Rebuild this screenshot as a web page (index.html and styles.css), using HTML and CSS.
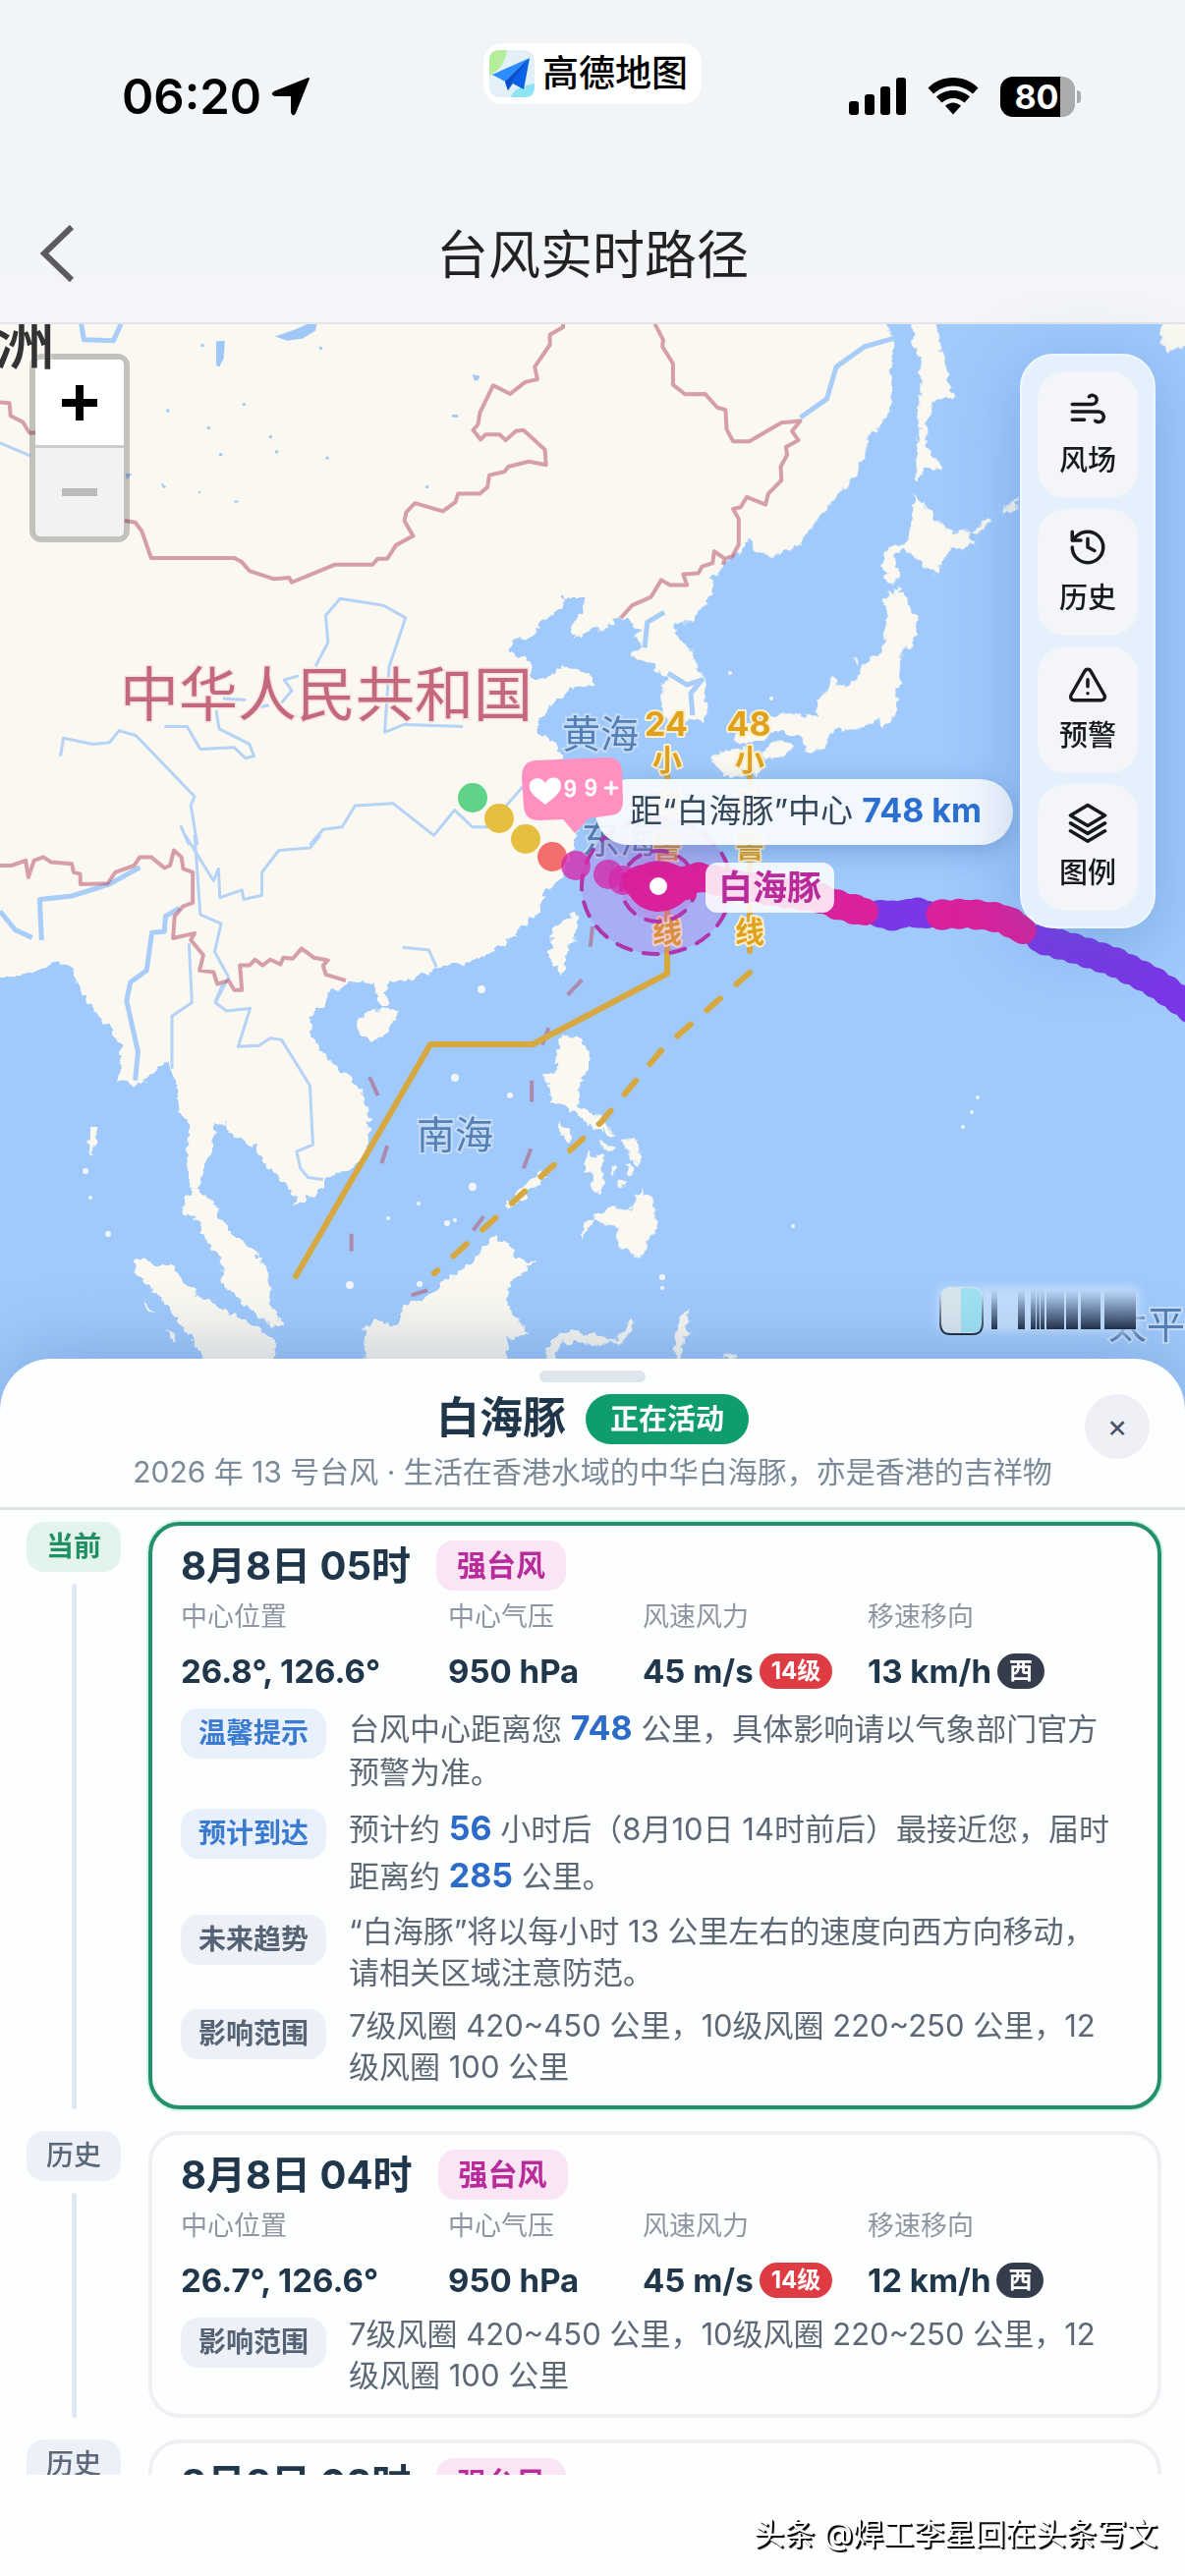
FILE: index.html
```html
<!DOCTYPE html>
<html lang="zh-CN">
<head>
    <meta charset="UTF-8">
    <meta name="viewport" content="width=device-width, initial-scale=1.0">
    <title>台风实时路径</title>
    <link rel="stylesheet" href="styles.css">
</head>
<body>
    <div class="status-bar">
        <div class="status-left">
            <span>06:20</span>
            <svg width="40" height="40" viewBox="0 0 40 40" stroke="#000" stroke-width="2" stroke-linejoin="round"><path d="M38 2L24 37Q22 40 21 36V20.500Q21 19 19.500 19H4Q0 18 3 16Z"/></svg>
        </div>
        <div class="app-pill">
            <svg width="46" height="48" viewBox="0 0 46 48">
                <rect width="46" height="48" rx="10" fill="#e4f0f7"/>
                <path d="M10 0H18Q16 18 0 26V10Q0 0 10 0Z" fill="#b5ee9b"/>
                <path d="M22 48Q24 38 46 34V38Q46 48 36 48Z" fill="#8fe3f2"/>
                <path d="M41 8L3 25L16 32Z" fill="#2a8cff"/>
                <path d="M41 8L16 32L19 41L24 34L35 40Z" fill="#0b62e6"/>
                <path d="M41 8L16 32L19 41L22 33Z" fill="#0a4fc4"/>
            </svg>
            <span>高德地图</span>
        </div>
        <div class="status-right">
            <svg width="58" height="38" viewBox="0 0 58 38"><rect y="24" width="10" height="14" rx="3"/><rect x="16" y="17" width="10" height="21" rx="3"/><rect x="32" y="9" width="10" height="29" rx="3"/><rect x="48" width="10" height="38" rx="3"/></svg>
            <svg width="52" height="38" viewBox="0 0 52 38"><path d="M26 0C36 0 45 4 51.500 10.500L46 16.500C40.500 11.500 33.500 8.500 26 8.500S11.500 11.500 6 16.500L.5 10.500C7 4 16 0 26 0ZM26 13C32.500 13 38.500 15.500 43 19.500L37.500 25.500C34.500 22.800 30.500 21 26 21S17.500 22.800 14.500 25.500L9 19.500C13.500 15.500 19.500 13 26 13ZM26 25.500C29 25.500 32 26.800 34 28.800L26 37.500L18 28.800C20 26.800 23 25.500 26 25.500Z"/></svg>
            <div class="battery"><span>80</span></div>
        </div>
    </div>

    <header class="header">
        <button class="back" aria-label="返回">
            <svg width="36" height="58" viewBox="0 0 36 58" fill="none" stroke="#5c5c60" stroke-width="6"><path d="M33 2L5 29L33 56"/></svg>
        </button>
        <h1>台风实时路径</h1>
    </header>

    <main class="map">
        <svg class="map-canvas" viewBox="0 330 1206 1110" font-family="Noto Sans CJK SC, sans-serif">
            <defs>
                <filter id="coast" x="0" y="0" width="100%" height="100%">
                    <feTurbulence type="fractalNoise" baseFrequency="0.12" numOctaves="2" seed="4"/>
                    <feDisplacementMap in="SourceGraphic" scale="11" xChannelSelector="R" yChannelSelector="G"/>
                </filter>
            </defs>
            <rect y="330" width="1206" height="1110" fill="#a0cafc"/>

            <!-- land -->
            <g fill="#faf8f0" filter="url(#coast)">
                <g transform="translate(0 320) scale(.3846 .3444)">
                    <path d="M-40-40H1610V930L1568 930L1510 970L1525 955L1510 940L1520 910L1548 870L1545 836H1490L1485 870L1430 905L1425 930L1385 965L1350 955L1345 995L1400 1030L1410 1075H1445L1490 1035L1530 1055L1568 1065V1095L1520 1100L1490 1130L1455 1150L1440 1180L1420 1205L1425 1240L1470 1260L1485 1310L1534 1400V1496L1510 1600H-40Z"/>
                </g>
                <g transform="translate(603 320) scale(.3846 .3444)">
                    <path d="M-20-40H780V28L800 85L790 150L792 260L770 320L735 360L720 410L690 480L610 590L570 640L550 680L500 705L470 718L430 700L415 665L390 700L350 740L318 780L315 830L290 870L270 900L218 920L230 960L265 1000L280 1050L298 1070L303 1165L290 1210L265 1190L235 1215H195L185 1160L175 1130L185 1100L200 1065L160 1055L165 1035L100 1010L130 985L115 950L130 935L95 900H75L50 912L-20 930Z"/>
                    <path d="M845-20H905L925 120L955 250L905 250L885 320L880 370L905 430L925 450L905 465L880 450L862 495L855 480L862 340L858 290L870 250L868 140L850 90Z"/>
                    <path d="M852 530L880 570L930 625L960 645L995 640L1010 680L980 690L945 695L910 765L870 740L850 710L820 700L800 710L815 770L790 800L775 790L780 760L762 745L775 710L790 685L830 680L850 610Z"/>
                    <path d="M790 815L830 825L835 855L860 900L855 950L835 990L815 1000L812 1080L800 1150L795 1195L765 1220L760 1195L720 1210L700 1230L650 1225L630 1240L620 1270L600 1290L580 1300L560 1285L555 1250L500 1235L470 1240L450 1260L380 1265L375 1235L400 1210L450 1195L480 1185L545 1180L590 1190L598 1135L625 1115L632 1065L650 1075V1105L700 1075L715 1040L760 1000L775 940L780 880L770 850Z"/>
                    <path d="M470 1270L500 1255L530 1275L520 1300L480 1305L455 1320L450 1290ZM310 1310L350 1290L400 1280L440 1300L455 1330L440 1360L380 1365H350L330 1340ZM1500-20H1620V70L1540 105L1520 110L1505 85ZM1130 535L1122 570L1085 590L1090 575ZM1060 602L1035 612L1005 645L1015 650L1045 620ZM690 1020L703 1015L700 1035ZM803 800L825 812L805 825Z"/>
                </g>
                <g transform="translate(0 850) scale(.3846 .3444)">
                    <path d="M-40-60H1530V0L1490 120L1445 160L1430 220L1395 260L1360 300L1330 320L1290 350L1250 375L1190 380L1150 400L1090 425L1035 435L1020 450L1030 500L1010 505L995 480L990 440L920 432L870 470L855 510L825 525L820 580L850 640L905 700L945 735L970 800L978 880L960 960L900 1000L855 1015V1040L780 1100L775 1045L735 1010L700 970L670 915L605 885L595 855H567L565 920L535 990L530 1060L560 1075L580 1130L620 1190L670 1220L710 1290L715 1380L748 1450L720 1455L650 1390L590 1330L585 1260L545 1190L510 1120L488 1130L487 1070L510 1060L495 980L500 850L475 820L465 720L440 670L370 740L310 720L325 620L280 560L215 470L190 390L150 370L110 400L60 410L-40 430Z"/>
                    <path d="M352 1250H380L410 1270L455 1272L500 1340L570 1390L640 1430L700 1470L728 1500V1600H560L530 1530L500 1480L440 1390L390 1330L358 1290ZM375 1385L400 1392L408 1412L385 1400ZM440 1455L465 1475L470 1500L450 1490Z"/>
                    <path d="M950 550L975 520L1030 510L1052 530L1030 570L1010 600L985 605L948 590ZM1520 232L1535 240L1520 310L1500 350L1490 410L1480 400L1455 360L1458 300L1480 260Z"/>
                    <path d="M1310 1185L1345 1205L1365 1245L1412 1265L1390 1285L1350 1330L1340 1385L1370 1430L1405 1478L1345 1485L1340 1600H975L960 1480L985 1430L1020 1445L1055 1455L1065 1390L1120 1370L1165 1330L1200 1295L1250 1265L1285 1215Z"/>
                    <path d="M1485 590L1540 600L1560 640L1555 700L1530 740V800L1575 830L1600 880L1560 860L1500 800L1460 790L1452 730L1438 715L1470 700L1475 640ZM1475 845L1510 870L1515 910L1490 890ZM1330 1100L1430 990L1445 1010L1350 1105ZM1555 940L1600 950L1590 1010L1545 990ZM1440 1600L1450 1510L1500 1465L1600 1480V1500H1480L1460 1600ZM1545 1150L1570 1130L1550 1180L1535 1200ZM240 860L258 858L245 945H237Z"/>
                </g>
                <g transform="translate(603 850) scale(.3846 .3444)">
                    <path d="M0 1130L50 1100L100 1110L130 1045L160 1080L172 1160L150 1195L130 1245L70 1220L65 1150L20 1150ZM75 900L120 895L128 975L105 960ZM0 960L20 950L30 1000L20 1060L0 1050ZM20 905L60 925L55 940L30 925ZM0 815L25 845L65 890L50 890L0 840ZM85 965L105 980L110 1010L95 1005ZM45 985L60 980L55 1010ZM65 1025L85 1020L75 1045ZM-20 1490H60L105 1430L110 1445L80 1500L-20 1505ZM230 1430L260 1400L245 1450L265 1470L240 1490L235 1550H222L215 1480ZM350 1530H380V1545H350Z"/>
                </g>
            </g>
            <g fill="#f2f6f8">
                <circle cx="490" cy="1007" r="4"/><circle cx="463" cy="1097" r="4"/><circle cx="519" cy="1115" r="3"/><circle cx="481" cy="1208" r="4"/><circle cx="356" cy="1308" r="4"/><circle cx="427" cy="1307" r="3"/><circle cx="426" cy="1225" r="2"/><circle cx="395" cy="1240" r="2"/><circle cx="455" cy="1245" r="3"/><circle cx="463" cy="1242" r="2"/><circle cx="87" cy="1192" r="3"/><circle cx="92" cy="1219" r="2"/><circle cx="110" cy="1256" r="3"/><circle cx="995" cy="1117" r="2"/><circle cx="989" cy="1132" r="2"/><circle cx="980" cy="1147" r="2"/><circle cx="807" cy="1248" r="2"/><circle cx="674" cy="1300" r="3"/><circle cx="674" cy="1311" r="2"/><circle cx="743" cy="685" r="2"/><circle cx="785" cy="711" r="2"/>
            </g>

            <!-- rivers and lakes -->
            <g class="river">
                <g transform="translate(0 320) scale(.3846 .3444)">
                    <path d="M835 1040L868 970L862 890L900 840L1015 860L1073 897L1030 1040L1018 1235L1070 1212L1225 1218M160 1305L168 1252L245 1270L290 1265L315 1230L360 1245L515 1425L505 1450L522 1568M478 1510L500 1568M435 1218H495L530 1285L620 1280L650 1312L672 1305L660 1270L580 1225L572 1170M590 1135L650 1140M690 1160L712 1155M745 1148L772 1112L752 1080L790 1068M820 1568L855 1522L905 1515L940 1452L1040 1445L1148 1540L1203 1465L1250 1515L1290 1515L1400 1375M0 380L80 418"/>
                    <path class="wide" d="M215 28L222 75L300 78L320 28"/>
                </g>
                <g transform="translate(0 850) scale(.3846 .3444)">
                    <path d="M490 0L565 135L578 100L582 185L640 162L645 190L693 178V110L738 45L820 38L848 0M515 0L530 235L585 262L568 345L605 420L570 495L600 520L662 512L630 625L685 622L715 600L745 605L820 740L828 915L785 935L795 985L815 1012L855 1018M500 320L508 495L455 535V690M1065 332L1135 340L1155 390M590 440L570 490"/>
                    <path class="wide" d="M110 310L105 190L190 180L290 145L370 95M0 225L40 280L85 303M475 215L438 240L435 285L402 288L388 400L345 435L335 490L365 640L358 725"/>
                </g>
                <g transform="translate(603 320) scale(.3846 .3444)">
                    <path class="wide" d="M800 70L720 95L645 155L620 250L550 305M190 880L145 910L138 985M200 1060L250 1095L290 1080L260 1120L265 1185"/>
                </g>
            </g>
            <g transform="translate(0 320) scale(.3846 .3444)" fill="#a0c8f6">
                <path d="M728 65L780 45L815 28H838L835 48L800 72L760 78ZM572 80L595 78L592 130L580 156L572 150ZM1250 178L1270 182L1265 195L1255 195ZM1196 296H1212V304H1196ZM332 470L350 472L335 488ZM425 496L440 510L432 514Z"/>
                <path d="M532 88h8v8h-8zM440 280h8v8h-8zM642 262h8v8h-8zM548 332h8v8h-8zM712 358h8v8h-8zM728 402h8v8h-8zM580 410h8v8h-8zM862 420h8v8h-8zM1126 506h8v8h-8zM620 550h10v6h-10zM525 522h6v6h-6zM845 96h8v8h-8z"/>
            </g>

            <!-- borders -->
            <g class="border">
                <g transform="translate(0 320) scale(.3846 .3444)">
                    <path d="M0 260L25 262L28 300L60 318L78 350H95M330 610L358 615L375 640L400 720H620L640 732L660 758L725 782L765 778L772 792L885 740H985L1000 722H1025L1048 682L1093 655L1070 610L1075 585L1098 558L1172 582L1205 555L1212 530L1270 530L1290 510L1295 475L1335 465L1345 450L1400 435L1445 445L1442 400L1385 342L1365 345L1338 372L1322 355H1285L1272 370L1252 342L1265 325L1270 290L1305 210L1350 235L1390 200L1422 192L1415 155L1455 90V60L1490 38V0"/>
                </g>
                <g transform="translate(603 320) scale(.3846 .3444)">
                    <path d="M165 28L187 75L185 95L213 145V208L245 236L298 235L330 275L352 282L355 340L372 375H415L500 320L550 315L528 345L545 372L512 392L515 415L498 450L500 490L465 530L458 562L408 540L392 570L372 575L387 605V680L370 715L350 722L322 700L318 735L290 745L280 765L240 768L250 800L205 800L182 785L155 835L105 860L75 897M345 740L350 722"/>
                </g>
                <g transform="translate(0 850) scale(.3846 .3444)">
                    <path d="M0 90H30L68 75L75 125L90 75L115 65L135 80L190 85L195 110L212 115L213 145L285 143L305 110L355 90L370 65H400L435 97L450 90L460 45L480 65L485 100L510 110V200L485 210L462 240L458 305L515 290L505 310L538 355L528 400L565 405L575 440L605 430L620 458H640L635 385H660L675 368L695 385L715 368L742 382L750 362L775 365L798 335L830 362L868 370L855 385L862 412L915 430"/>
                    <path d="M978 715L1000 770M1025 918L1010 970M930 1178V1230M1407 725V788M1405 927L1385 985M1280 1127L1252 1168M1132 1345L1088 1360M1540 428L1502 472M1452 570L1435 620M1568 270L1562 330"/>
                </g>
            </g>

            <!-- place names -->
            <g class="sea-name">
                <text x="572" y="761">黄海</text>
                <text x="592" y="868">东海</text>
                <text x="424" y="1169">南海</text>
                <text x="1128" y="1362">太平洋</text>
            </g>
            <text class="country-name" x="122" y="729">中华人民共和国</text>

            <!-- warning lines -->
            <g class="warn-line">
                <path d="M679 760V991L542 1063H438L301 1299"/>
                <path d="M763 760V968"/>
                <path d="M763 990L674 1068L612 1142L442 1296" stroke-dasharray="18 22"/>
            </g>
            <g class="warn-text">
                <text x="678" y="749" class="warn-num">24</text><text x="679" y="784">小</text><text x="679" y="828">时</text><text x="679" y="872">警</text><text x="679" y="915">戒</text><text x="679" y="959">线</text>
                <text x="762" y="749" class="warn-num">48</text><text x="763" y="784">小</text><text x="763" y="828">时</text><text x="763" y="872">警</text><text x="763" y="915">戒</text><text x="763" y="959">线</text>
            </g>

            <!-- wind circles -->
            <g fill="#c23fd0" fill-opacity=".2" stroke="#b234aa" stroke-width="4" stroke-linecap="round" stroke-dasharray="15 13">
                <ellipse cx="668" cy="902" rx="76" ry="69"/>
                <ellipse cx="670" cy="902" rx="38" ry="36"/>
            </g>

            <!-- track -->
            <g fill="none" stroke-width="28" stroke-linecap="round" stroke-linejoin="round">
                <path stroke="#7a37e6" d="M1058 955L1095 966L1134 979L1172 998L1190 1010L1220 1032"/>
                <path stroke="#7a37e6" stroke-width="31" stroke-dasharray="0 15" d="M1064 957L1095 966L1134 979L1172 998L1190 1010L1220 1032"/>
                <path stroke="#7a37e6" d="M895 930L911 932L925 929L944 931"/>
                <path stroke="#7a37e6" stroke-width="31" stroke-dasharray="0 26" d="M908 932L933 929L960 931"/>
                <path stroke="#da219c" d="M690 897L711 893L749 900L790 908L834 914L855 922L880 928M958 931L985 930L1010 933L1024 936L1041 947"/>
                <path stroke="#da219c" stroke-width="31" stroke-dasharray="0 18" d="M711 893L749 900L790 908L834 914L855 922L880 928M958 931L985 930L1010 933L1024 936L1041 947"/>
            </g>
            <g>
                <circle cx="481" cy="812" r="15" fill="#5fd388"/>
                <circle cx="508" cy="833" r="15" fill="#e6bf40"/>
                <circle cx="535" cy="854" r="15" fill="#e6bf40"/>
                <circle cx="562" cy="872" r="15" fill="#f36f6e"/>
                <g fill="#d42aad" fill-opacity=".8"><circle cx="586" cy="881" r="15"/><circle cx="619" cy="890" r="15"/><circle cx="634" cy="896" r="15"/></g>
            </g>
            <path d="M633 890Q646 880 654 880Q670 872 690 881Q704 888 707 900Q710 910 708 915L698 916Q684 929 668 928Q650 926 641 912Q636 906 633 904Z" fill="#da219c"/>
            <circle cx="670" cy="902" r="9" fill="#fff"/>

            <!-- blurred watermark -->
            <g>
                <defs>
                    <linearGradient id="strip" x2="0" y2="1"><stop offset="0" stop-color="#6d8bb5" stop-opacity="0"/><stop offset=".5" stop-color="#5f7595" stop-opacity=".8"/><stop offset="1" stop-color="#1f2b42"/></linearGradient>
                    <linearGradient id="side" x2="0" y2="1"><stop offset="0" stop-color="#1b2a38" stop-opacity="0"/><stop offset="1" stop-color="#1b2a38"/></linearGradient>
                    <filter id="glow" x="-20%" y="-40%" width="140%" height="180%"><feGaussianBlur stdDeviation="5"/></filter>
                </defs>
                <rect x="954" y="1310" width="206" height="46" rx="8" fill="#c3defd" filter="url(#glow)"/>
                <rect x="957" y="1310" width="43" height="47" rx="10" fill="#d9e6ee"/>
                <path d="M978 1311H990Q999 1312 999 1320V1348Q999 1356 990 1356H978Z" fill="#9fe2f2"/>
                <path d="M957 1316V1347Q957 1358 967 1358H990Q1000 1358 1000 1347V1316" fill="none" stroke="url(#side)" stroke-width="2"/>
                <path fill="url(#strip)" d="M1009 1312h6v41h-6zM1036 1312h7v41h-7zM1049 1312h5v41h-5zM1055 1312h3v41h-3zM1059 1312h4v41h-4zM1065 1312h18v41h-18zM1085 1312h12v41h-12zM1100 1312h20v41h-20zM1124 1312h32v41h-32z"/>
            </g>
        </svg>

        <div class="distance">距“白海豚”中心 <strong>748 km</strong></div>
        <div class="storm-name">白海豚</div>
        <svg class="bubble" width="108" height="84" viewBox="0 0 108 84">
            <path d="M16 5L88 2Q103 1 104 16L105 46Q105 60 92 61L70 64L56 79L44 65L20 66Q5 66 4 52L2 22Q2 6 16 5Z" fill="#ff90c0"/>
            <path d="M26 50C18 43 8 38 10 29C12 22 22 21 26 28C30 20 41 21 42 29C43 38 33 44 26 50Z" fill="#fff"/>
            <text x="45" y="42" font-family="Liberation Sans, sans-serif" font-size="23" fill="#fff" stroke="#fff">9</text>
            <text x="66" y="41" font-family="Liberation Sans, sans-serif" font-size="23" fill="#fff" stroke="#fff">9</text>
            <path d="M93 27V39M87 33H99" stroke="#fff" stroke-width="3" stroke-linecap="round"/>
        </svg>

        <div class="zoom-control">
            <button aria-label="放大"><svg width="36" height="36"><path d="M14 0H22V14H36V22H22V36H14V22H0V14H14Z"/></svg></button>
            <button aria-label="缩小" disabled><svg width="36" height="36"><path d="M0 14H36V22H0Z" fill="#bbb"/></svg></button>
        </div>
        <span class="continent">洲</span>

        <nav class="tools">
            <button>
                <svg class="icon" viewBox="0 0 24 24"><path d="M12.800 4.400A2.600 2.600 0 1 1 14.700 8.800H3M3 13.200H18.500A3 3 0 1 1 16.400 18.500M3 17.800H10"/></svg>
                风场
            </button>
            <button>
                <svg class="icon" viewBox="0 0 24 24"><path d="M3 12A9 9 0 1 0 12 3A9.750 9.750 0 0 0 5.300 5.700L3 8M3 3V8H8M12 7V12L16 14"/></svg>
                历史
            </button>
            <button>
                <svg class="icon" viewBox="0 0 24 24"><path d="M21.700 18L13.700 4A2 2 0 0 0 10.300 4L2.300 18A2 2 0 0 0 4 21H20A2 2 0 0 0 21.700 18ZM12 9V13M12 17H12.010"/></svg>
                预警
            </button>
            <button>
                <svg class="icon" viewBox="0 0 24 24"><path d="M12 2L2 8L12 14L22 8ZM2 12.500L12 18.500L22 12.500M2 17L12 23L22 17"/></svg>
                图例
            </button>
        </nav>
    </main>

    <section class="sheet">
        <div class="sheet-head">
            <div class="handle"></div>
            <div class="sheet-title">
                <h2>白海豚</h2>
                <span class="active-badge">正在活动</span>
            </div>
            <p class="subtitle">2026 年 13 号台风 · 生活在香港水域的中华白海豚，亦是香港的吉祥物</p>
            <button class="close" aria-label="关闭">×</button>
        </div>

        <div class="timeline">
            <article class="entry current">
                <div class="rail"><span class="rail-tag">当前</span></div>
                <div class="card">
                    <div class="card-head"><h3>8月8日 05时</h3><span class="level">强台风</span></div>
                    <dl class="metrics">
                        <div><dt>中心位置</dt><dd>26.8°, 126.6°</dd></div>
                        <div><dt>中心气压</dt><dd>950 hPa</dd></div>
                        <div><dt>风速风力</dt><dd>45 m/s <span class="chip red">14级</span></dd></div>
                        <div><dt>移速移向</dt><dd>13 km/h <span class="chip dark">西</span></dd></div>
                    </dl>
                    <div class="note"><span class="note-tag blue">温馨提示</span><p>台风中心距离您 <strong>748</strong> 公里，具体影响请以气象部门官方预警为准。</p></div>
                    <div class="note"><span class="note-tag blue">预计到达</span><p>预计约 <strong>56</strong> 小时后（8月10日 14时前后）最接近您，届时距离约 <strong>285</strong> 公里。</p></div>
                    <div class="note"><span class="note-tag">未来趋势</span><p>“白海豚”将以每小时 13 公里左右的速度向西方向移动，请相关区域注意防范。</p></div>
                    <div class="note"><span class="note-tag">影响范围</span><p>7级风圈 420~450 公里，10级风圈 220~250 公里，12级风圈 100 公里</p></div>
                </div>
            </article>

            <article class="entry">
                <div class="rail"><span class="rail-tag">历史</span></div>
                <div class="card">
                    <div class="card-head"><h3>8月8日 04时</h3><span class="level">强台风</span></div>
                    <dl class="metrics">
                        <div><dt>中心位置</dt><dd>26.7°, 126.6°</dd></div>
                        <div><dt>中心气压</dt><dd>950 hPa</dd></div>
                        <div><dt>风速风力</dt><dd>45 m/s <span class="chip red">14级</span></dd></div>
                        <div><dt>移速移向</dt><dd>12 km/h <span class="chip dark">西</span></dd></div>
                    </dl>
                    <div class="note"><span class="note-tag">影响范围</span><p>7级风圈 420~450 公里，10级风圈 220~250 公里，12级风圈 100 公里</p></div>
                </div>
            </article>

            <article class="entry">
                <div class="rail"><span class="rail-tag">历史</span></div>
                <div class="card">
                    <div class="card-head"><h3>8月8日 03时</h3><span class="level">强台风</span></div>
                </div>
            </article>
        </div>

        <footer class="credit">头条 @焊工李星回在头条写文</footer>
    </section>
</body>
</html>
```

FILE: styles.css
```css
* {
    box-sizing: border-box;
}
body {
    margin: 0;
    height: 100vh;
    display: flex;
    flex-direction: column;
    overflow: hidden;
    background-color: #f1f5f8;
    color: #20364a;
    font-family: Inter, "Noto Sans CJK SC", sans-serif;
}
h1, h2, h3, p, dl, dd {
    margin: 0;
}
button {
    border: none;
    padding: 0;
    font-family: inherit;
    color: inherit;
    cursor: pointer;
}

/* status bar */
.status-bar {
    flex: none;
    height: 188px;
    padding: 44px 112px 0;
    display: grid;
    grid-template-columns: 1fr auto 1fr;
    align-items: start;
    color: #000;
}
.status-left {
    display: flex;
    align-items: center;
    gap: 10px;
    height: 108px;
    padding-left: 12px;
    font-size: 49px;
    font-weight: 600;
}
.app-pill {
    display: flex;
    align-items: center;
    gap: 8px;
    height: 62px;
    padding: 0 14px 0 6px;
    border-radius: 20px;
    background-color: #fff;
    font-size: 37px;
    font-weight: 500;
    line-height: 58px;
}
.status-right {
    display: flex;
    align-items: center;
    justify-content: flex-end;
    gap: 22px;
    height: 108px;
}
.battery {
    position: relative;
    width: 76px;
    height: 41px;
    padding-right: 2px;
    border-radius: 13px;
    background: linear-gradient(90deg, #000 80%, #a9abad 80%);
    color: #fff;
    font-size: 34px;
    font-weight: 700;
    line-height: 41px;
    text-align: center;
}
.battery::after {
    content: "";
    position: absolute;
    right: -6px;
    top: 14px;
    width: 4px;
    height: 13px;
    border-radius: 0 4px 4px 0;
    background-color: #a9abad;
}

/* page header */
.header {
    flex: none;
    height: 142px;
    padding: 0 40px;
    display: grid;
    grid-template-columns: 1fr auto 1fr;
    align-items: center;
    border-bottom: 2px solid #e2e4e6;
    background-image: linear-gradient(#f1f5f8, #f4f5f8);
}
.header h1 {
    padding-bottom: 4px;
    font-size: 53px;
    font-weight: 400;
    color: #222;
}
.back {
    width: 36px;
    height: 58px;
    background: none;
}

/* map */
.map {
    flex: none;
    position: relative;
}
.map-canvas {
    display: block;
    width: 100%;
    height: auto;
}
.river path {
    fill: none;
    stroke: #b4d3f6;
    stroke-width: 3;
    vector-effect: non-scaling-stroke;
    stroke-linejoin: round;
}
.river .wide {
    stroke: #a8cdf8;
    stroke-width: 5;
}
.border path {
    fill: none;
    stroke: #b8566c;
    stroke-opacity: .55;
    stroke-width: 4;
    vector-effect: non-scaling-stroke;
    stroke-linejoin: round;
}
.sea-name {
    font-size: 39px;
    fill: #5580b5;
    stroke: #c6dcf6;
    stroke-width: 4px;
    paint-order: stroke;
}
.country-name {
    font-size: 60px;
    fill: #c4697c;
    stroke: #f8e4e4;
    stroke-width: 3px;
    paint-order: stroke;
}
.warn-line path {
    fill: none;
    stroke: #d8a840;
    stroke-width: 6;
    stroke-linecap: round;
    stroke-linejoin: round;
}
.warn-text {
    font-family: Inter, "Noto Sans CJK SC", sans-serif;
    font-size: 30px;
    font-weight: 700;
    text-anchor: middle;
    fill: #e0a21c;
    stroke: #fbefcc;
    stroke-width: 4px;
    stroke-linejoin: round;
    paint-order: stroke;
}
.warn-num {
    font-size: 34px;
}
.distance {
    position: absolute;
    left: 606px;
    top: 463px;
    height: 67px;
    padding: 0 32px 0 35px;
    border-radius: 34px;
    background-color: rgba(248, 251, 255, .94);
    box-shadow: 0 6px 26px rgba(50, 90, 150, .35);
    font-size: 33px;
    line-height: 64px;
    white-space: nowrap;
    color: #34465a;
}
.distance strong {
    font-size: 34px;
    color: #2c6fd0;
}
.storm-name {
    position: absolute;
    left: 718px;
    top: 548px;
    padding: 0 13px;
    border-radius: 12px;
    background-color: rgba(255, 255, 255, .85);
    font-size: 35px;
    font-weight: 700;
    line-height: 51px;
    color: #b92a9b;
}
.bubble {
    position: absolute;
    left: 529px;
    top: 439px;
}
.continent {
    position: absolute;
    left: -6px;
    top: 0;
    height: 46px;
    overflow: hidden;
    display: flex;
    align-items: flex-end;
    font-size: 62px;
    font-weight: 500;
    line-height: 54px;
    color: #333;
    text-shadow: 0 0 3px #fff;
}
.zoom-control {
    position: absolute;
    left: 30px;
    top: 30px;
    border: 6px solid rgba(0, 0, 0, .22);
    border-radius: 12px;
    background-clip: padding-box;
}
.zoom-control button {
    display: flex;
    align-items: center;
    justify-content: center;
    width: 90px;
    height: 90px;
    background-color: #fff;
    border-bottom: 3px solid #ccc;
    border-radius: 5px 5px 0 0;
}
.zoom-control button:last-child {
    background-color: #f2f2f3;
    border-bottom: none;
    border-radius: 0 0 5px 5px;
}
.tools {
    position: absolute;
    right: 30px;
    top: 30px;
    display: flex;
    flex-direction: column;
    gap: 11px;
    padding: 16px;
    border: 2px solid #eef6ff;
    border-radius: 34px;
    background-color: #e5f0fd;
    box-shadow: 0 14px 70px rgba(60, 110, 180, .35);
}
.tools button {
    width: 102px;
    height: 129px;
    display: flex;
    flex-direction: column;
    align-items: center;
    justify-content: center;
    gap: 10px;
    border-radius: 28px;
    background-color: #f3f5f9;
    font-size: 29px;
    font-weight: 500;
    line-height: 42px;
    color: #17191c;
}
.icon {
    width: 42px;
    height: 42px;
    fill: none;
    stroke: currentColor;
    stroke-width: 2;
    stroke-linecap: round;
    stroke-linejoin: round;
}

/* bottom sheet */
.sheet {
    position: relative;
    flex: 1;
    min-height: 0;
    margin-top: -57px;
    display: flex;
    flex-direction: column;
    border-radius: 52px 52px 0 0;
    background-color: #fdfefe;
    box-shadow: 0 -10px 70px rgba(60, 100, 160, .3);
}
.sheet-head {
    position: relative;
    flex: none;
    height: 154px;
    padding-top: 12px;
    display: flex;
    flex-direction: column;
    align-items: center;
    border-bottom: 3px solid #dde5e7;
}
.handle {
    width: 108px;
    height: 12px;
    border-radius: 6px;
    background-color: #dfe5ec;
}
.sheet-title {
    display: flex;
    align-items: center;
    gap: 20px;
    height: 51px;
    margin-top: 12px;
}
.sheet-title h2 {
    font-size: 44px;
    font-weight: 700;
    line-height: 48px;
    padding-bottom: 3px;
}
.active-badge {
    padding: 0 25px;
    border-radius: 26px;
    background-color: #109d6c;
    font-size: 29px;
    font-weight: 700;
    line-height: 51px;
    color: #fff;
}
.subtitle {
    margin-top: 6px;
    font-size: 30px;
    line-height: 44px;
    color: #7b8998;
    white-space: nowrap;
}
.close {
    position: absolute;
    right: 36px;
    top: 36px;
    width: 66px;
    height: 66px;
    border-radius: 50%;
    background-color: #eef0f6;
    font-size: 32px;
    line-height: 66px;
    color: #4a5468;
}
.timeline {
    flex: 1;
    min-height: 0;
    overflow: hidden;
    padding: 12px 24px 0 27px;
}
.entry {
    display: grid;
    grid-template-columns: 96px 1fr;
    gap: 28px;
    margin-bottom: 22px;
}
.rail {
    display: flex;
    flex-direction: column;
    align-items: center;
    gap: 12px;
}
.rail::after {
    content: "";
    flex: 1;
    width: 5px;
    border-radius: 3px;
    background-color: #e0e7f4;
}
.rail-tag {
    width: 96px;
    border-radius: 18px;
    background-color: #edf0f6;
    font-size: 28px;
    font-weight: 500;
    line-height: 51px;
    text-align: center;
    color: #5b6879;
}
.card {
    min-height: 292px;
    padding: 15px 29px 18px;
    border: 4px solid #eff0f4;
    border-radius: 32px;
}
.current .card {
    border-color: #23906a;
    box-shadow: 0 0 0 2px #d2f6e8;
}
.current .rail-tag {
    background-color: #e2f4ec;
    font-weight: 700;
    color: #218f66;
}
.card-head {
    display: flex;
    align-items: center;
    gap: 26px;
}
.card-head h3 {
    font-size: 40px;
    font-weight: 700;
    line-height: 51px;
}
.level {
    padding: 0 21px;
    border-radius: 18px;
    background-color: #f9e5f3;
    font-size: 30px;
    font-weight: 700;
    line-height: 51px;
    color: #b92a9b;
}
.metrics {
    display: grid;
    grid-template-columns: 272fr 198fr 229fr 266fr;
    margin: 9px 0 12px;
}
.metrics dt {
    margin-bottom: 15px;
    font-size: 27px;
    line-height: 36px;
    color: #8d96a2;
}
.metrics dd {
    display: flex;
    align-items: center;
    gap: 6px;
    font-size: 33px;
    font-weight: 700;
    line-height: 44px;
    white-space: nowrap;
}
.chip {
    padding: 0 12px;
    border-radius: 18px;
    font-size: 24px;
    line-height: 36px;
    color: #fff;
}
.red {
    background-color: #de3b42;
}
.dark {
    background-color: #353c4c;
}
.note {
    display: flex;
    align-items: flex-start;
    gap: 23px;
    margin-bottom: 12px;
}
.note:last-child {
    margin-bottom: 0;
}
.note-tag {
    flex: none;
    margin-top: 4px;
    padding: 0 18px;
    border-radius: 18px;
    background-color: #edf0f6;
    font-size: 28px;
    font-weight: 700;
    line-height: 51px;
    color: #566375;
}
.blue {
    background-color: #e8f0fc;
    color: #3a7bd0;
}
.note p {
    padding-right: 12px;
    font-size: 31px;
    line-height: 42px;
    color: #5d6876;
}
.note strong {
    font-size: 34px;
    line-height: 48px;
    color: #2c6cc8;
}
.credit {
    flex: none;
    height: 103px;
    padding: 36px 28px 0 0;
    text-align: right;
    font-size: 31px;
    line-height: 48px;
    color: #fff;
    text-shadow: 2px 2px 1px #000, 1px 1px 0 #000;
}
```
